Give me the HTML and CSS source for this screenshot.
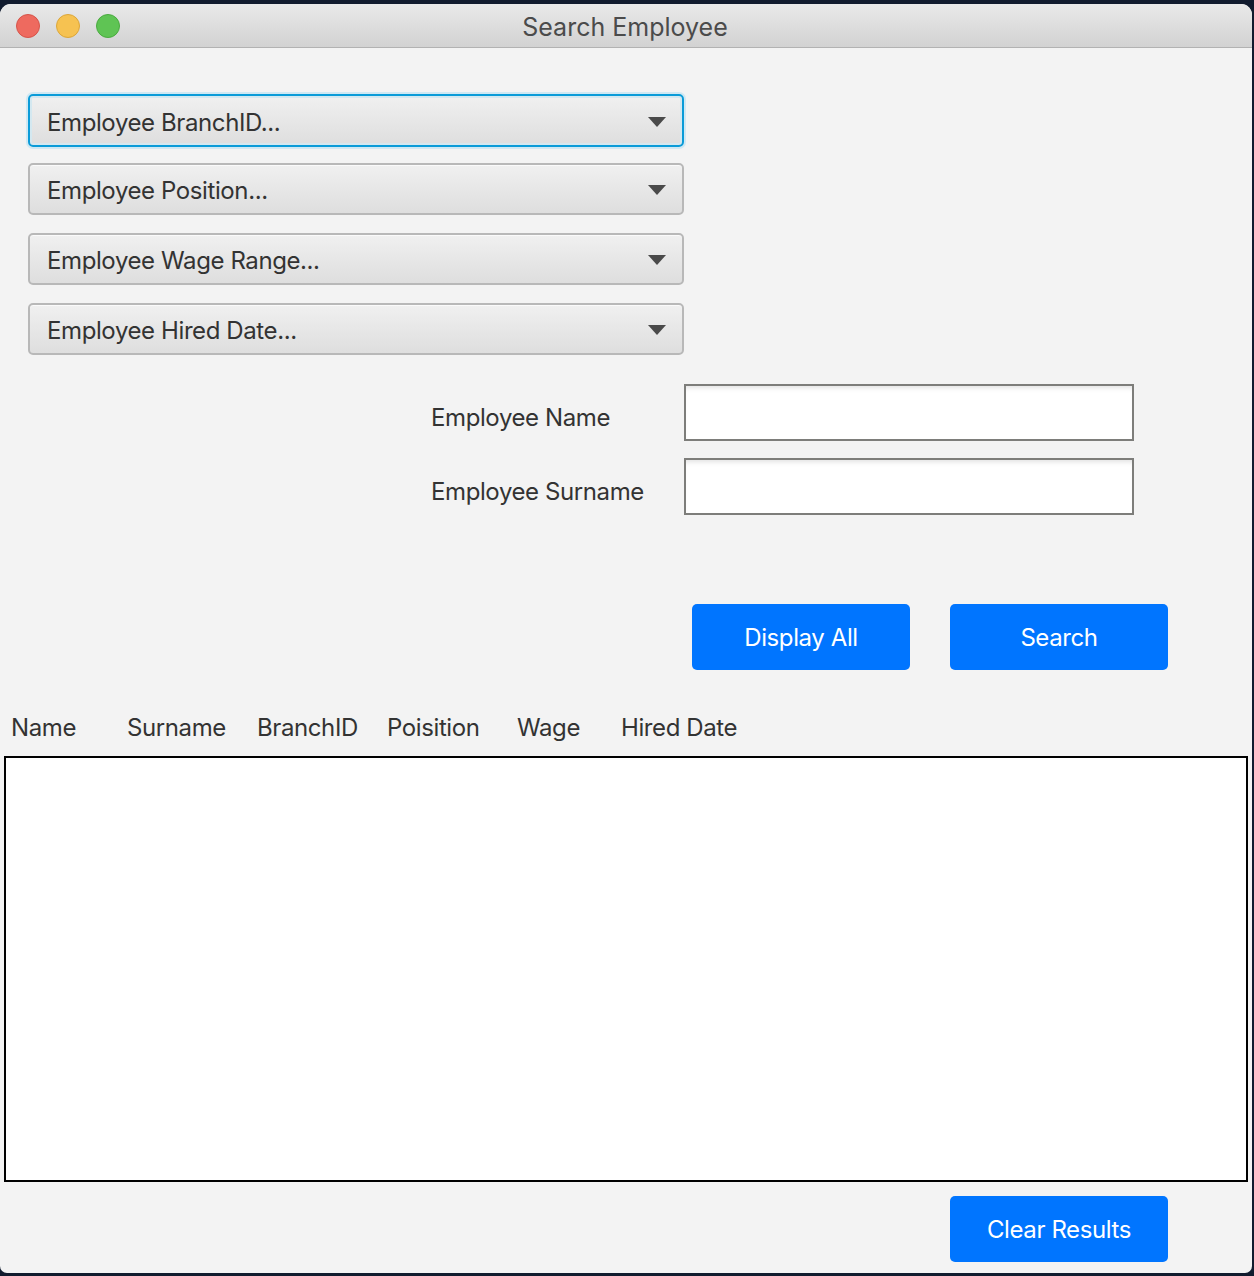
FILE: index.html
```html
<!DOCTYPE html>
<html>
<head>
<meta charset="utf-8">
<link rel="stylesheet" href="styles.css">
</head>
<body>
<div class="window">
  <div class="titlebar">
    <div class="lights">
      <span class="light red"></span>
      <span class="light yellow"></span>
      <span class="light green"></span>
    </div>
    <div class="title">Search Employee</div>
  </div>
  <div class="content">
    <div class="combos">
      <div class="combo focused"><span>Employee BranchID...</span><i class="arrow"></i></div>
      <div class="combo"><span>Employee Position...</span><i class="arrow"></i></div>
      <div class="combo"><span>Employee Wage Range...</span><i class="arrow"></i></div>
      <div class="combo"><span>Employee Hired Date...</span><i class="arrow"></i></div>
    </div>
    <div class="form">
      <div class="row"><label>Employee Name</label><div class="field"></div></div>
      <div class="row"><label>Employee Surname</label><div class="field"></div></div>
    </div>
    <div class="actions">
      <button class="btn">Display All</button>
      <button class="btn">Search</button>
    </div>
    <div class="headers">
      <span class="h-name">Name</span>
      <span class="h-surname">Surname</span>
      <span class="h-branch">BranchID</span>
      <span class="h-pos">Poisition</span>
      <span class="h-wage">Wage</span>
      <span class="h-date">Hired Date</span>
    </div>
    <div class="results"></div>
    <div class="bottom">
      <button class="btn">Clear Results</button>
    </div>
  </div>
</div>
</body>
</html>
```
FILE: styles.css
```css
html, body {
  margin: 0;
  padding: 0;
}
body {
  background: #111b2e;
  width: 1254px;
  height: 1276px;
  overflow: hidden;
  font-family: "Inter", "Roboto", sans-serif;
  letter-spacing: -0.4px;
}
.window {
  width: 1252px;
  height: 1269px;
  margin-top: 4px;
  background: #f3f3f3;
  border-radius: 11px 11px 7px 7px;
  overflow: hidden;
  display: flex;
  flex-direction: column;
}
.titlebar {
  height: 43px;
  flex: none;
  background: linear-gradient(#e9e9e9, #d2d2d2);
  border-bottom: 1px solid #b2b2b2;
  position: relative;
  display: flex;
  align-items: center;
  justify-content: center;
}
.lights {
  position: absolute;
  left: 16px;
  top: 10px;
  display: flex;
  gap: 16px;
}
.light {
  width: 24px;
  height: 24px;
  border-radius: 50%;
  box-sizing: border-box;
}
.red { background: #ee6a5f; border: 1px solid #d5544a; }
.yellow { background: #f6c251; border: 1px solid #dba63a; }
.green { background: #5fc454; border: 1px solid #4aaa3f; }
.title {
  font-size: 25px;
  letter-spacing: 0;
  color: #4b4b4b;
  margin-left: -2px;
  padding-top: 2px;
}
.content {
  flex: 1;
  display: flex;
  flex-direction: column;
}
.combos {
  display: flex;
  flex-direction: column;
  gap: 18px;
  margin: 45px 0 0 28px;
  width: 656px;
}
.combo {
  height: 52px;
  box-sizing: border-box;
  border: 2px solid #b8b8b8;
  border-radius: 5px;
  background: linear-gradient(#f0f0f0, #dedede);
  box-shadow: inset 0 1px 0 #fafafa;
  display: flex;
  align-items: center;
  justify-content: space-between;
  padding: 3px 16px 0 17px;
  font-size: 24px;
  color: #333;
}
.combo .arrow {
  margin-top: -1px;
}
.combo.focused {
  height: 53px;
  margin-top: 1px;
  margin-bottom: -2px;
  border-color: #0a9bd8;
  box-shadow: 0 0 0 2px #cfe8f3, inset 0 0 0 2px #d4e8f0;
}
.arrow {
  width: 0;
  height: 0;
  border-left: 9px solid transparent;
  border-right: 9px solid transparent;
  border-top: 10px solid #4a4a4a;
}
.form {
  margin-top: 29px;
  display: flex;
  flex-direction: column;
  gap: 17px;
}
.row {
  display: flex;
  align-items: center;
}
.row label {
  width: 253px;
  margin-left: 431px;
  padding-top: 9px;
  font-size: 24px;
  color: #333;
}
.field {
  width: 450px;
  height: 57px;
  box-sizing: border-box;
  border: 2px solid #7d7d7a;
  background: #fff;
  box-shadow: inset 0 5px 5px -3px #e2e2e2;
}
.actions {
  display: flex;
  gap: 40px;
  margin: 89px 0 0 692px;
}
.btn {
  width: 218px;
  height: 66px;
  border: none;
  border-radius: 5px;
  background: #0075ff;
  color: #fff;
  font-family: inherit;
  font-size: 24px;
  letter-spacing: -0.4px;
  padding: 0;
}
.headers {
  height: 86px;
  position: relative;
  font-size: 24px;
  color: #333;
}
.headers span {
  position: absolute;
  top: 43px;
}
.h-name { left: 11px; }
.h-surname { left: 127px; }
.h-branch { left: 257px; }
.h-pos { left: 387px; }
.h-wage { left: 517px; }
.h-date { left: 621px; }
.results {
  margin-left: 4px;
  width: 1244px;
  height: 426px;
  box-sizing: border-box;
  border: 2px solid #000;
  background: #fff;
}
.bottom {
  margin: 14px 0 0 950px;
}
```
